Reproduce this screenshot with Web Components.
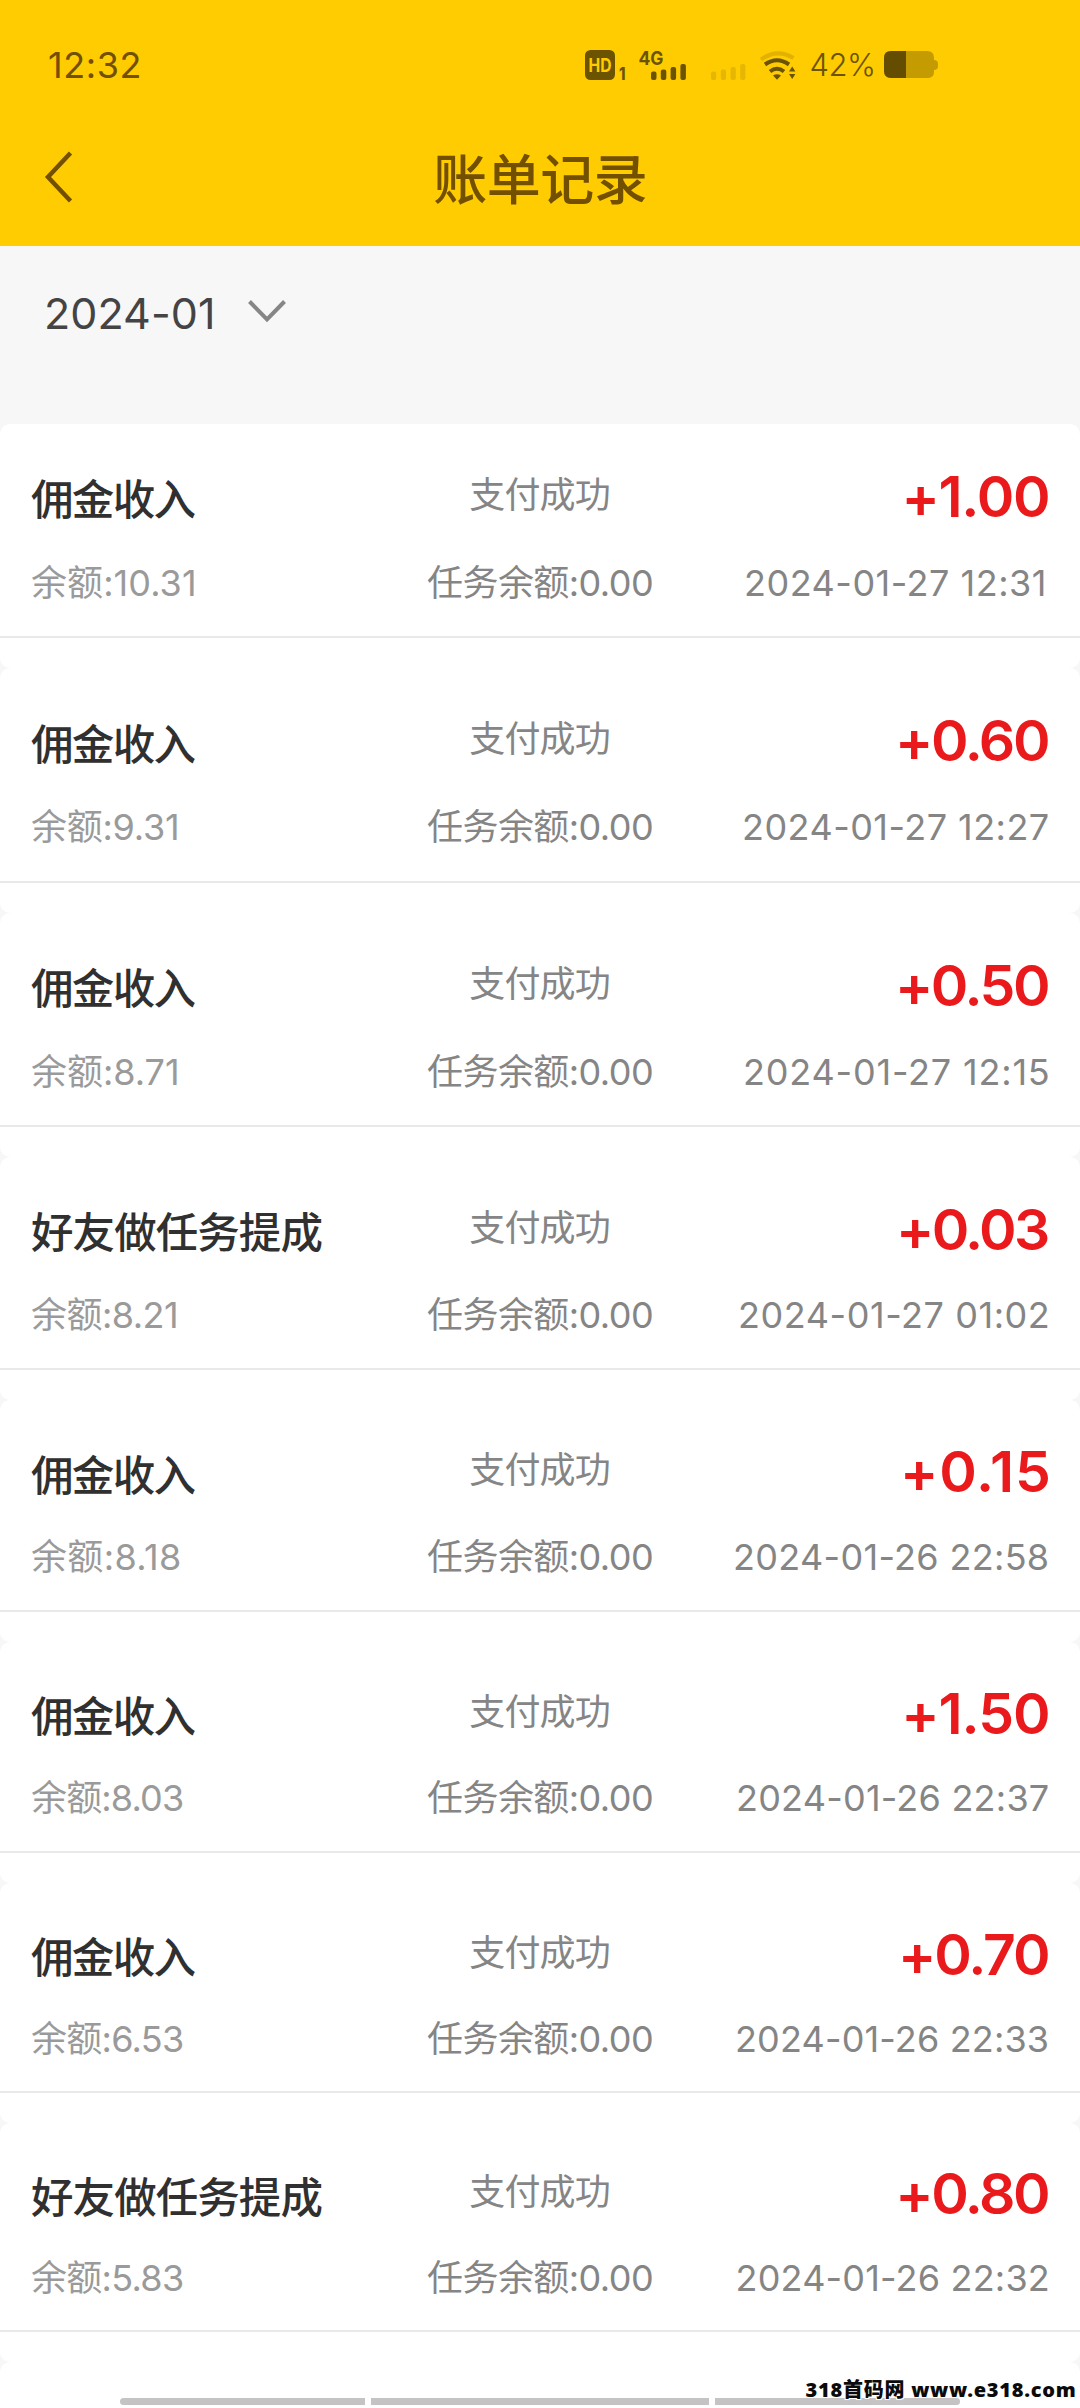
<!DOCTYPE html>
<html lang="zh-CN">
<head>
<meta charset="utf-8">
<title>账单记录</title>
<style>
  body { margin: 0; background: #f7f7f7; font-family: Inter, "Noto Sans CJK SC", sans-serif; }
</style>
</head>
<body>
<bill-page></bill-page>
<script>
const measure = document.createElement('canvas').getContext('2d');

/* One line of text whose visible ink spans exactly `width` pixels. */
class InkText extends HTMLElement {
  constructor() {
    super();
    this.attachShadow({ mode: 'open' }).innerHTML = `
      <style>:host{display:block;white-space:nowrap;line-height:1;flex:none;font-variant-ligatures:none;letter-spacing:.01px}
      span{display:block;width:max-content}</style>
      <span><slot></slot></span>`;
  }
  connectedCallback() {
    const cs = getComputedStyle(this), chars = [...this.textContent], target = +this.getAttribute('width');
    const span = this.shadowRoot.querySelector('span');
    measure.font = `${cs.fontWeight} ${cs.fontSize} ${cs.fontFamily}`;
    const left = -measure.measureText(chars[0]).actualBoundingBoxLeft;
    const last = measure.measureText(chars[chars.length - 1]);
    const right = last.width - last.actualBoundingBoxRight;
    const ink = span.getBoundingClientRect().width - left - right;
    this.style.width = target + 'px';
    this.style.letterSpacing = (target - ink) / (chars.length - 1) + 'px';
    span.style.marginLeft = -left + 'px';
  }
}
customElements.define('ink-text', InkText);

class StatusBar extends HTMLElement {
  constructor() {
    super();
    this.attachShadow({ mode: 'open' }).innerHTML = `
      <style>
        :host{display:flex;height:130px;align-items:center;box-sizing:border-box;padding:0 142px 0 49px;color:#735000}
        .time{font-size:36px}
        .icons{margin-left:auto;margin-right:15px}
        .pct{font-size:31px;font-weight:300;margin-right:11px;margin-bottom:2px;color:#6b5400}
        svg{display:block;flex:none}
      </style>
      <ink-text class="time" width="90.5">12:32</ink-text>
      <svg class="icons" width="211" height="36" viewBox="586 45 211 36" fill="#6b5300" font-family="Inter, sans-serif" font-weight="700">
        <rect x="586" y="48" width="30" height="30" rx="5.5"/>
        <text x="589.5" y="69.8" font-size="18.5" textLength="23" lengthAdjust="spacingAndGlyphs" fill="#ffcc02">HD</text>
        <text x="620" y="78" font-size="17" font-weight="800" textLength="6.5" lengthAdjust="spacingAndGlyphs">1</text>
        <text x="639.5" y="62.5" font-size="19" textLength="25" lengthAdjust="spacingAndGlyphs">4G</text>
        <rect x="652" y="69.5" width="5.5" height="8.5" rx="2"/><rect x="661.8" y="67.5" width="5.5" height="10.5" rx="2"/>
        <rect x="671.6" y="65" width="5.5" height="13" rx="2"/><rect x="681.4" y="62" width="5.5" height="16" rx="2"/>
        <g fill="#e5b602"><rect x="712" y="69.5" width="5.2" height="8.5" rx="2"/><rect x="721.8" y="67.5" width="5.2" height="10.5" rx="2"/>
        <rect x="731.6" y="65" width="5.2" height="13" rx="2"/><rect x="741.2" y="62" width="5.2" height="16" rx="2"/></g>
        <g fill="none" stroke-width="4">
          <path d="M762 57.5Q778 46 794.500 56" stroke="#e3b100"/>
          <path d="M766 62.500Q778 54 790 62.500" stroke="#6b5300"/>
          <path d="M771 69.500Q778 64 785 69.500" stroke="#6b5300"/>
        </g>
        <path d="M774 73.500Q778 71 782 73.500L778 77.800Z"/>
        <path d="M790 69.500L793.200 64.500L796.400 69.500ZM790 72L793.200 77L796.400 72Z"/>
      </svg>
      <ink-text class="pct" width="62.500">42%</ink-text>
      <svg width="54" height="28" viewBox="0 0 54 28">
        <path d="M7 0H43Q50 0 50 7V9Q54 9 54 13V15Q54 19 50 19V21Q50 27 43 27H7Q0 27 0 20V7Q0 0 7 0Z" fill="#c59b02"/>
        <path d="M7 0H22V27H7Q0 27 0 20V7Q0 0 7 0Z" fill="#644d00"/>
      </svg>`;
  }
}
customElements.define('status-bar', StatusBar);

class NavHeader extends HTMLElement {
  constructor() {
    super();
    this.attachShadow({ mode: 'open' }).innerHTML = `
      <style>
        :host{display:grid;grid-template-columns:1fr auto 1fr;align-items:center;height:96px;padding:0 43px 20px;color:#735000;font-size:54px;font-weight:500}
        svg{display:block;margin-bottom:3px}
        div{padding-top:6px}
      </style>
      <svg width="32" height="54" viewBox="0 0 32 54"><path d="M27.500 3L5 27L27.500 51" fill="none" stroke="#735000" stroke-width="4.500"/></svg>
      <div><slot></slot></div><span></span>`;
  }
}
customElements.define('nav-header', NavHeader);

class MonthPicker extends HTMLElement {
  constructor() {
    super();
    this.attachShadow({ mode: 'open' }).innerHTML = `
      <style>
        :host{display:flex;height:178px;padding:0 0 44px 47px;box-sizing:border-box;align-items:center;gap:35px;color:#444}
        ink-text{font-size:43px}
        svg{margin-bottom:4px}
      </style>
      <ink-text width="165">2024-01</ink-text>
      <svg width="40" height="24" viewBox="0 0 40 24"><path d="M2.500 2.500L20 20.500L37.500 2.500" fill="none" stroke="#868686" stroke-width="4"/></svg>`;
  }
}
customElements.define('month-picker', MonthPicker);

class BillCard extends HTMLElement {
  connectedCallback() {
    const root = this.attachShadow({ mode: 'open' });
    const d = this.data;
    root.innerHTML = `
      <style>
        :host{display:grid;grid-template-rows:26fr 92fr 81fr 13fr 2px 30px;height:${this.getAttribute('height')}px;background:#fff;border-radius:10px;overflow:hidden}
        .row{display:grid;grid-template-columns:1fr auto 1fr;align-items:center;padding:0 32px 0 31px;color:#858585;font-size:36px;min-height:0}
        .top{grid-row:2}.sub{grid-row:3}
        .row>:last-child{justify-self:end}
        .title{font-size:42.500px;font-weight:500;color:#303030;padding-top:9px}
        .state{margin-bottom:2px}
        .amount{font-size:57px;font-weight:560;color:#ea1a1c;padding-top:1px}
        .balance{color:#9a9a9a}
        .line{grid-row:5;background:#e9e9ea}
      </style>
      ${d ? `<div class="row top"><ink-text class="title" width="${d[1]}">${d[0]}</ink-text>
        <ink-text class="state" width="138.500">支付成功</ink-text>
        <ink-text class="amount" width="${d[5]}">${d[4]}</ink-text></div>
      <div class="row sub"><ink-text class="balance" width="${d[3]}">余额:${d[2]}</ink-text>
        <ink-text width="225">任务余额:0.00</ink-text>
        <ink-text width="${d[7]}" style="margin-right:${d[8] || 0}px">${d[6]}</ink-text></div>
      <div class="line"></div>` : ''}`;
  }
}
customElements.define('bill-card', BillCard);

class GestureBar extends HTMLElement {
  constructor() {
    super();
    this.attachShadow({ mode: 'open' }).innerHTML = `
      <style>
        :host{position:absolute;left:0;right:0;bottom:3px;display:flex;gap:6px;padding:0 120px;height:7px}
        i{flex:245 0 0;background:#c5c3c3}
        .start{border-radius:4px 0 0 4px}.mid{flex-grow:338}.end{border-radius:0 4px 4px 0}
      </style><i class="start"></i><i class="mid"></i><i class="end"></i>`;
  }
}
customElements.define('gesture-bar', GestureBar);

class SiteMark extends HTMLElement {
  constructor() {
    super();
    this.attachShadow({ mode: 'open' }).innerHTML = `
      <style>
        :host{position:absolute;right:5px;bottom:8px;font:900 20px "Noto Sans","Noto Sans CJK SC",sans-serif;color:#0b0b0b;
          text-shadow:1px 1px 0 #fff,-1px -1px 0 #fff,1px -1px 0 #fff,-1px 1px 0 #fff,0 0 2px #fff}
      </style><ink-text width="269.500">318首码网 www.e318.com</ink-text>`;
  }
}
customElements.define('site-mark', SiteMark);

const bills = [
  [244, '佣金收入', 164.5, '10.31', 163, '+1.00', 141.5, '2024-01-27 12:31', 298, 4],
  [245, '佣金收入', 164.5, '9.31', 146, '+0.60', 148, '2024-01-27 12:27', 304],
  [244, '佣金收入', 164.5, '8.71', 146, '+0.50', 148, '2024-01-27 12:15', 303],
  [243, '好友做任务提成', 290.5, '8.21', 145, '+0.03', 147, '2024-01-27 01:02', 308],
  [242, '佣金收入', 164.5, '8.18', 149, '+0.15', 143, '2024-01-26 22:58', 313],
  [241, '佣金收入', 164.5, '8.03', 152, '+1.50', 141.7, '2024-01-26 22:37', 310],
  [240, '佣金收入', 164.5, '6.53', 152, '+0.70', 145, '2024-01-26 22:33', 311],
  [239, '好友做任务提成', 290.5, '5.83', 152, '+0.80', 147.7, '2024-01-26 22:32', 310.5]
];

class BillPage extends HTMLElement {
  connectedCallback() {
    const root = this.attachShadow({ mode: 'open' });
    root.innerHTML = `
      <style>
        :host{display:block;position:relative;width:1080px;height:2408px;overflow:hidden}
        header{background:#ffcc02;height:246px}
      </style>
      <header><status-bar></status-bar><nav-header><ink-text width="211.500">账单记录</ink-text></nav-header></header>
      <month-picker></month-picker>
      <main></main>
      <gesture-bar></gesture-bar>
      <site-mark></site-mark>`;
    const list = root.querySelector('main');
    for (const [height, ...data] of bills) {
      const card = document.createElement('bill-card');
      card.setAttribute('height', height);
      card.data = data;
      list.append(card);
    }
    const next = document.createElement('bill-card');
    next.setAttribute('height', 80);
    list.append(next);
  }
}
customElements.define('bill-page', BillPage);
</script>
</body>
</html>
